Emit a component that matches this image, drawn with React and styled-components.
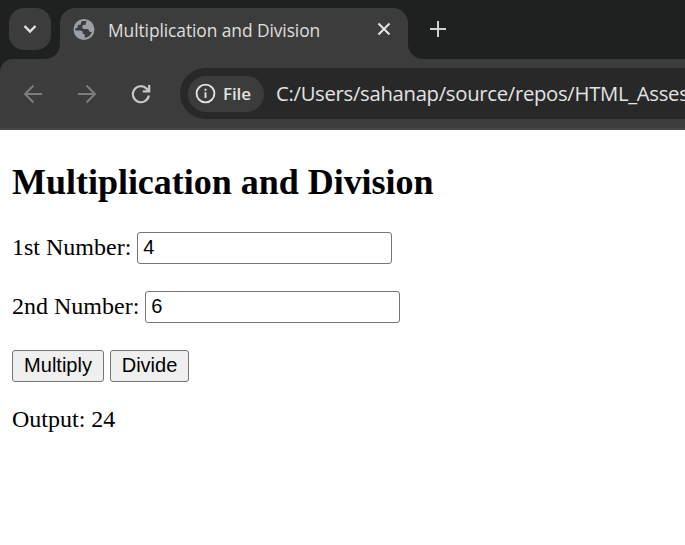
import React, { useState } from "react";
import styled, { createGlobalStyle } from "styled-components";

const GlobalStyle = createGlobalStyle`
  * { box-sizing: border-box; }
  body { margin: 0; background: #fff; overflow: hidden; }
`;

const uiFont = `"Open Sans", "Noto Sans", sans-serif`;

const Window = styled.div`
  width: 685px;
  height: 545px;
  overflow: hidden;
  background: #fff;
`;

const TabStrip = styled.div`
  display: flex;
  align-items: flex-start;
  height: 59px;
  padding: 8px 0 0 9px;
  background: #1f2120;
`;

const TabSearch = styled.button`
  display: flex;
  align-items: center;
  justify-content: center;
  width: 42px;
  height: 42px;
  padding: 0;
  border: 0;
  border-radius: 15px;
  background: #3c3c3c;
`;

const Tab = styled.div`
  position: relative;
  display: flex;
  align-items: center;
  width: 348px;
  height: 51px;
  margin-left: 9px;
  padding: 0 16px 8px 13px;
  border-radius: 15px 15px 0 0;
  background: #3c3c3c;

  &::before,
  &::after {
    content: "";
    position: absolute;
    bottom: 0;
    width: 15px;
    height: 15px;
  }
  &::before {
    left: -15px;
    background: radial-gradient(circle at 0 0, transparent 14.5px, #3c3c3c 15.5px);
  }
  &::after {
    right: -15px;
    background: radial-gradient(circle at 100% 0, transparent 14.5px, #3c3c3c 15.5px);
  }
`;

const TabTitle = styled.span`
  flex: 1;
  margin-left: 13px;
  font: 17.4px/24px ${uiFont};
  letter-spacing: -0.08px;
  white-space: nowrap;
  color: #dfdfdf;
`;

const IconButton = styled.button`
  display: flex;
  padding: 0;
  border: 0;
  background: none;
  margin: ${(p) => p.$margin || 0};
`;

const ToolbarBack = styled.div`
  height: 71px;
  background: #1f2120;
`;

const Toolbar = styled.div`
  display: flex;
  align-items: flex-start;
  height: 71px;
  padding: 9px 0 0 21px;
  border-bottom: 2px solid #4a4748;
  border-top-left-radius: 13px;
  background: #3c3c3c;
`;

const Navigation = styled.div`
  display: flex;
  align-items: center;
  gap: 30px;
  height: 51px;
  width: 159px;
`;

const AddressBar = styled.div`
  display: flex;
  align-items: center;
  flex: 1;
  min-width: 0;
  height: 51px;
  padding-left: 8px;
  overflow: hidden;
  border-radius: 26px 0 0 26px;
  background: #282828;
`;

const FileChip = styled.div`
  display: flex;
  flex: none;
  align-items: center;
  gap: 7px;
  width: 76px;
  height: 36px;
  padding-left: 7px;
  border-radius: 18px;
  background: #3c3c3c;
  color: #e3e3e3;
  font: 600 17px/24px ${uiFont};
  letter-spacing: -0.1px;
`;

const Address = styled.span`
  margin: 0 0 2px 12px;
  font: 20.3px/28px ${uiFont};
  letter-spacing: -0.3px;
  white-space: nowrap;
  color: #e3e3e3;
`;

const Page = styled.main`
  padding: 31px 12px 0;
  color: #000;
  font: 24px/27px "Liberation Serif", "Times New Roman", serif;
`;

const Heading = styled.h2`
  margin: 0 0 29px;
  font-size: 36px;
  line-height: 42px;
  letter-spacing: -0.02px;
`;

const Field = styled.label`
  display: flex;
  align-items: center;
  gap: 6px;
  height: 32px;
  margin-bottom: 27px;
`;

const FieldName = styled.span`
  padding-bottom: 2px;
`;

const NumberInput = styled.input`
  width: 255px;
  height: 32px;
  padding: 0 5px 2px;
  border: 1px solid #767676;
  border-radius: 3px;
  background: #fff;
  color: #000;
  font: 20px "Liberation Sans", Arial, sans-serif;
`;

const Actions = styled.div`
  display: flex;
  gap: 6px;
`;

const ActionButton = styled.button`
  width: ${(p) => p.$width}px;
  height: 32px;
  padding: 0 0 2px;
  border: 1px solid #767676;
  border-radius: 3px;
  background: #efefef;
  color: #000;
  font: 20px "Liberation Sans", Arial, sans-serif;
`;

const Output = styled.p`
  margin: 24px 0 0;
`;

function Globe() {
  return (
    <svg width="22" height="22" viewBox="0 0 22 22">
      <circle cx="11" cy="10.5" r="10.5" fill="#9aa0a6" />
      <path
        d="M13.700 2.500c-1.500-.5-3.100-.6-4.600-.2-.7.3-1.200.9-1.200 1.700v.7c0 .6-.5 1-1.100 1H5.700c-.6 0-1 .4-1 1v1.300c0 .6-.5 1-1 1.100L2.200 9.400a8.800 8.800 0 0 0 .1 2.200h5.200c1.300 0 2.200.9 2.200 2.200v1.100h2v3.800a8.700 8.700 0 0 0 7.300-5.700h-1.200c-.8 0-1.400-.4-1.700-1.100l-.5-1.200c-.2-.5-.6-.7-1.100-.7h-3.300c-1.100 0-2-.9-2-2V7.700c0-1.100.9-1.900 2-1.900h1.600V4.400c0-.9.3-1.500.9-1.900Z"
        fill="#3c3c3c"
      />
    </svg>
  );
}

function Stroke({ d, size, width = 2, color = "#e3e3e3" }) {
  return (
    <svg width={size} height={size} viewBox={`0 0 ${size} ${size}`} fill="none" stroke={color} strokeWidth={width}>
      <path d={d} />
    </svg>
  );
}

function Reload() {
  return (
    <svg width="20" height="20" viewBox="0 0 20 20" fill="none" stroke="#c7c7c7" strokeWidth="2.2">
      <path d="M17.8 11.500A8 8 0 1 1 15.500 4.500L17.500 6.800" />
      <path d="M18.200 1v6.400h-6.400" />
    </svg>
  );
}

function Info() {
  return (
    <svg width="21" height="21" viewBox="0 0 21 21" fill="none" stroke="#e3e3e3" strokeWidth="1.9">
      <circle cx="10.5" cy="10.5" r="8.9" />
      <path d="M10.500 9.300v5.800M10.500 5.800v2" />
    </svg>
  );
}

export default function App() {
  const [first, setFirst] = useState("4");
  const [second, setSecond] = useState("6");
  const [output, setOutput] = useState(24);

  return (
    <Window>
      <GlobalStyle />
      <TabStrip>
        <TabSearch aria-label="Search tabs">
          <Stroke size={14} width={2.4} d="M1.500 4 7 9.500 12.500 4" />
        </TabSearch>
        <Tab>
          <Globe />
          <TabTitle>Multiplication and Division</TabTitle>
          <IconButton aria-label="Close tab" $margin="0 1px 2px 0">
            <Stroke size={14} width={2.1} d="M1.500 1.500l11 11M12.500 1.500l-11 11" />
          </IconButton>
        </Tab>
        <IconButton aria-label="New tab" $margin="13px 0 0 22px">
          <Stroke size={16} color="#d0d0d0" d="M8 0v16M0 8h16" />
        </IconButton>
      </TabStrip>
      <ToolbarBack>
        <Toolbar>
          <Navigation>
            <IconButton aria-label="Back" $margin="0 0 0 2px">
              <Stroke size={20} color="#7d7d7d" d="M19 10H2M10.500 1.500 2 10l8.500 8.500" />
            </IconButton>
            <IconButton aria-label="Forward" $margin="0 0 0 4px">
              <Stroke size={20} color="#7d7d7d" d="M1 10h17M9.500 1.500 18 10l-8.500 8.500" />
            </IconButton>
            <IconButton aria-label="Reload" $margin="0 0 0 4px">
              <Reload />
            </IconButton>
          </Navigation>
          <AddressBar>
            <FileChip>
              <Info />
              File
            </FileChip>
            <Address>C:/Users/sahanap/source/repos/HTML_Asses</Address>
          </AddressBar>
        </Toolbar>
      </ToolbarBack>
      <Page>
        <Heading>Multiplication and Division</Heading>
        <Field>
          <FieldName>1st Number:</FieldName>
          <NumberInput value={first} onChange={(e) => setFirst(e.target.value)} />
        </Field>
        <Field>
          <FieldName>2nd Number:</FieldName>
          <NumberInput value={second} onChange={(e) => setSecond(e.target.value)} />
        </Field>
        <Actions>
          <ActionButton $width={92} onClick={() => setOutput(first * second)}>Multiply</ActionButton>
          <ActionButton $width={79} onClick={() => setOutput(first / second)}>Divide</ActionButton>
        </Actions>
        <Output>Output: {output}</Output>
      </Page>
    </Window>
  );
}
